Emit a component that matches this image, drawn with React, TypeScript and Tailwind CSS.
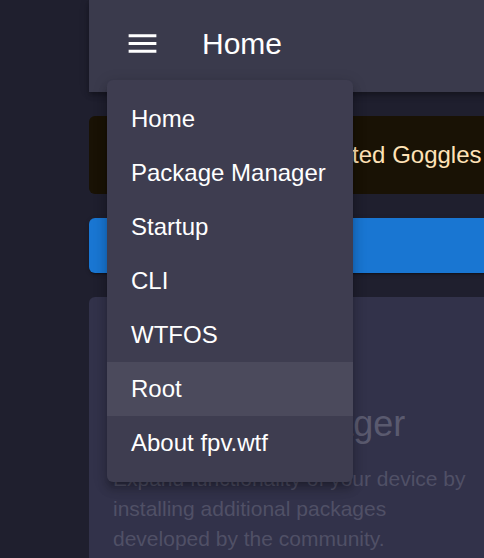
import React from 'react';

const menuItems = ['Home', 'Package Manager', 'Startup', 'CLI', 'WTFOS', 'Root', 'About fpv.wtf'];

function MenuIcon() {
  return (
    <svg viewBox="0 0 24 24" className="h-[37px] w-[37px]" fill="white">
      <path d="M3 18h18v-2H3zm0-5h18v-2H3zm0-5h18V6H3z" />
    </svg>
  );
}

function WarningIcon() {
  return (
    <svg viewBox="0 0 24 24" className="h-[33px] w-[33px] shrink-0" fill="#ffa726">
      <path d="M12 5.99 19.53 19H4.47zM12 2 1 21h22zm1 14h-2v2h2zm0-6h-2v4h2z" />
    </svg>
  );
}

export default function App() {
  const active = 'Root';

  return (
    <div className="relative h-[558px] w-[484px] overflow-hidden bg-[#1f1f2e] font-['Liberation_Sans',Arial,sans-serif]">
      <div className="flex h-full">
        <div className="w-[89px] shrink-0" />
        <div className="w-[418px] shrink-0">
          <header className="flex h-[92px] items-center bg-[#3a3a4c] pb-[5px] pl-[35px] shadow-[0_2px_4px_-1px_rgba(0,0,0,0.2),0_4px_5px_0_rgba(0,0,0,0.14),0_1px_10px_0_rgba(0,0,0,0.12)]">
            <MenuIcon />
            <h1 className="ml-[41px] text-[30px] leading-none text-white">Home</h1>
          </header>

          <main className="flex flex-col gap-[24px] pt-[24px]">
            <div className="flex h-[78px] items-center gap-[18px] rounded-[6px] bg-[#191205] px-[24px] text-[24px] whitespace-nowrap text-[#ffe2b7]">
              <WarningIcon />
              <span className="ml-[4px]">Connect your rooted Goggles</span>
            </div>

            <button className="flex h-[55px] items-center justify-center rounded-[6px] bg-[#1976d2] text-[21px] font-bold tracking-wide text-white shadow-[0_3px_1px_-2px_rgba(0,0,0,0.2),0_2px_2px_0_rgba(0,0,0,0.14),0_1px_5px_0_rgba(0,0,0,0.12)]">
              CONNECT
            </button>

            <div className="h-[300px] rounded-t-[6px] bg-[#32324a] px-[24px] pt-[103px]">
              <h2 className="mb-[16px] text-[36px] leading-[48px] text-[#5a5a6f]">Package Manager</h2>
              <p className="text-[21px] leading-[30px] text-[#505066]">
                Expand functionality of your device by installing additional packages developed by the community.
              </p>
            </div>
          </main>
        </div>
      </div>

      <nav className="absolute left-[107px] top-[80px] w-[246px] rounded-[6px] bg-[#3e3d50] py-[12px] shadow-[0_5px_5px_-3px_rgba(0,0,0,0.2),0_8px_10px_1px_rgba(0,0,0,0.14),0_3px_14px_2px_rgba(0,0,0,0.12)]">
        <ul>
          {menuItems.map(item => (
            <li
              key={item}
              className={`flex h-[54px] items-center px-[24px] text-[24px] text-white ${item === active ? 'bg-[#4b4a5c]' : ''}`}
            >
              {item}
            </li>
          ))}
        </ul>
      </nav>
    </div>
  );
}
